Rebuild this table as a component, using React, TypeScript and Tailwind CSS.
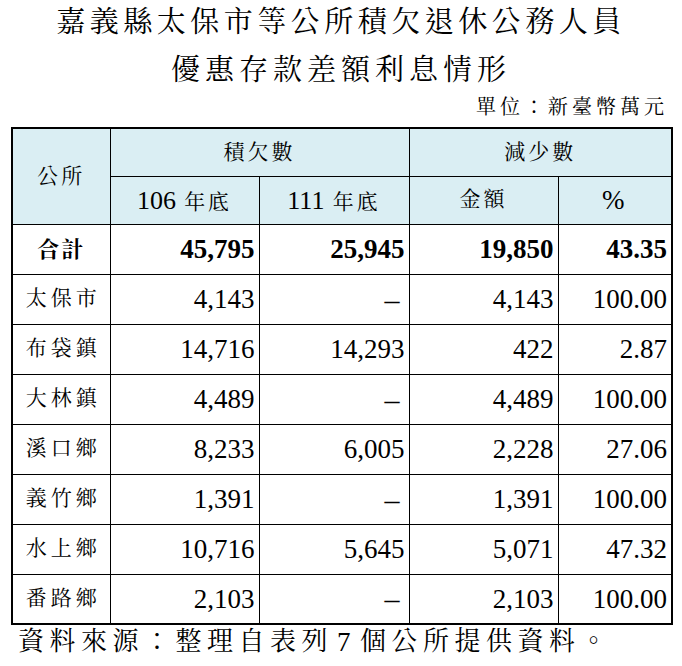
const serif = "font-['Liberation_Serif','Noto_Serif_CJK_TC','Noto_Sans_CJK_TC',serif]";

const rows = [
  { name: '太保市', a: '4,143', b: '', c: '4,143', d: '100.00' },
  { name: '布袋鎮', a: '14,716', b: '14,293', c: '422', d: '2.87' },
  { name: '大林鎮', a: '4,489', b: '', c: '4,489', d: '100.00' },
  { name: '溪口鄉', a: '8,233', b: '6,005', c: '2,228', d: '27.06' },
  { name: '義竹鄉', a: '1,391', b: '', c: '1,391', d: '100.00' },
  { name: '水上鄉', a: '10,716', b: '5,645', c: '5,071', d: '47.32' },
  { name: '番路鄉', a: '2,103', b: '', c: '2,103', d: '100.00' },
];

const th = 'border border-black bg-[#daeef3] font-normal text-[21px] tracking-[3px] text-center p-0';
const num = 'border border-black text-right pr-[4px] text-[27px] p-0 whitespace-nowrap';

export default function App() {
  return (
    <div className={`w-[682px] h-[666px] bg-white text-black ${serif}`}>
      <div className="h-[44px] flex items-center justify-center text-[29px] tracking-[4.5px] leading-none">
        嘉義縣太保市等公所積欠退休公務人員
      </div>
      <div className="h-[52px] flex items-center justify-center text-[29px] tracking-[5px] leading-none">
        優惠存款差額利息情形
      </div>
      <div className="h-[22px] flex items-center justify-end pr-[14px] text-[20px] tracking-[4px] leading-none">
        單位：新臺幣萬元
      </div>
      <div className="h-[9px]" />
      <table className="ml-[11px] w-[660px] border-collapse border-2 border-black table-fixed">
        <colgroup>
          <col className="w-[98px]" />
          <col className="w-[149px]" />
          <col className="w-[150px]" />
          <col className="w-[149px]" />
          <col className="w-[114px]" />
        </colgroup>
        <thead>
          <tr className="h-[48px]">
            <th rowSpan={2} className={th}>公所</th>
            <th colSpan={2} className={th}>積欠數</th>
            <th colSpan={2} className={th}>減少數</th>
          </tr>
          <tr className="h-[48px]">
            <th className={th}><span className="text-[26px] tracking-normal">106</span> 年底</th>
            <th className={th}><span className="text-[26px] tracking-normal">111</span> 年底</th>
            <th className={th}>金額</th>
            <th className={`${th} text-[27px]`}>%</th>
          </tr>
        </thead>
        <tbody>
          <tr className="h-[50px] font-bold">
            <td className="border border-black text-center text-[22px] tracking-[2px] p-0">合計</td>
            <td className={num}>45,795</td>
            <td className={num}>25,945</td>
            <td className={num}>19,850</td>
            <td className={num}>43.35</td>
          </tr>
          {rows.map((r) => (
            <tr key={r.name} className="h-[50px]">
              <td className="border border-black text-center text-[21px] tracking-[4px] pl-[4px] p-0">{r.name}</td>
              <td className={num}>{r.a}</td>
              <td className={num}>{r.b || <span className="pr-[5px] text-[30px]">–</span>}</td>
              <td className={num}>{r.c}</td>
              <td className={num}>{r.d}</td>
            </tr>
          ))}
        </tbody>
      </table>
      <div className="h-[34px] flex items-center pl-[18px] text-[26px] tracking-[5.5px] leading-none">
        資料來源：整理自表列<span className="mx-[4px] text-[27px]">7</span>個公所提供資料。
      </div>
    </div>
  );
}
